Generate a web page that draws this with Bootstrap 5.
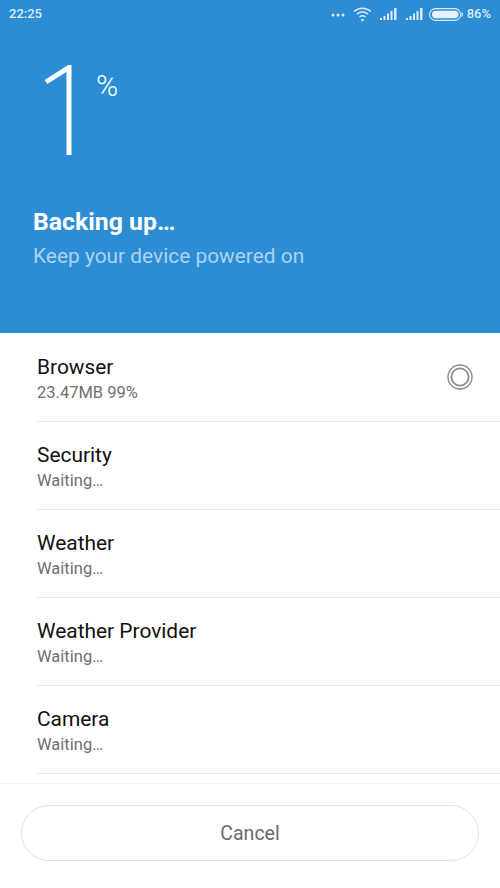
<!DOCTYPE html>
<html lang="en">
  <head>
    <meta charset="UTF-8" />
    <meta name="viewport" content="width=device-width, initial-scale=1.0" />
    <title>Backup</title>
    <link href="https://cdn.jsdelivr.net/npm/bootstrap@5.3.0/dist/css/bootstrap.min.css" rel="stylesheet" />
    <style>
      html, body { height: 888px; overflow: hidden; }
      body { font-family: Roboto, "Liberation Sans", sans-serif; background: #fff; color: #111; }
      .hero { height: 333px; background: #2d8dd4; color: #fff; }
      .status-bar { height: 28px; padding: 0 9px; color: #d9ecfa; font-size: 13px; font-weight: 500; }
      .status-icons svg { display: block; }
      .ic-gap { margin-right: 8px; }
      .ic-gap-last { margin-right: 5px; }
      .pct-row { height: 144px; padding-left: 45px; }
      .one-svg { margin-top: 37px; }
      .pct-sign { font-size: 30px; font-weight: 300; line-height: 1; margin: 43px 0 0 21px; }
      .hero-text { padding: 36px 0 0 33px; }
      .hero-title { font-size: 24.8px; font-weight: 700; line-height: 28px; margin: 0; }
      .hero-sub { font-size: 20.9px; line-height: 28px; margin: 6px 0 0; color: #a9d3f2; }
      .task-list { height: 451px; padding-top: 1px; overflow: hidden; border-bottom: 1px solid #f4f4f4; }
      .task-row { height: 88px; margin-left: 37px; padding-top: 19.5px; border-bottom: 1px solid #e9e9e9; }
      .task-name { font-size: 20.9px; line-height: 26px; }
      .task-state { font-size: 16.5px; line-height: 20px; margin-top: 3.5px; color: #6f6f6f; }
      .task-spin { margin: 10px 27px 0 0; }
      .cancel-wrap { padding: 21px 21px 0; }
      .cancel-btn { height: 56px; padding-top: 8px; border: 1px solid #e2e2e2; border-radius: 28px; background: #fff; color: #6b6b6b; font-size: 19.5px; }
    </style>
  </head>
  <body>
    <div class="hero">
      <div class="status-bar d-flex justify-content-between align-items-center">
        <span>22:25</span>
        <div class="status-icons d-flex align-items-center">
          <svg width="14" height="6" viewBox="0 0 14 6" fill="#d9ecfa" class="ic-gap"><circle cx="2" cy="4" r="1.5"/><circle cx="7" cy="4" r="1.5"/><circle cx="12" cy="4" r="1.5"/></svg>
          <svg width="19" height="16" viewBox="0 0 19 16" fill="none" stroke="#d9ecfa" stroke-width="1.5" class="ic-gap"><path d="M1 5.5C6 1 13 1 18 5.5"/><path d="M3.8 8.2C7 5.4 12 5.4 15.2 8.2"/><path d="M6.5 11C8.2 9.6 10.8 9.6 12.5 11"/><circle cx="9.5" cy="14" r="1.3" fill="#d9ecfa" stroke="none"/></svg>
          <svg width="18" height="14" viewBox="0 0 18 14" fill="#d9ecfa" class="ic-gap"><rect x="0" y="11" width="2" height="2"/><rect x="3.5" y="9" width="2" height="4"/><rect x="7" y="6.5" width="2" height="6.5"/><rect x="10.5" y="4" width="2" height="9"/><rect x="14" y="1" width="2.5" height="12"/></svg>
          <svg width="18" height="14" viewBox="0 0 18 14" fill="#d9ecfa" class="ic-gap-last"><rect x="0" y="11" width="2" height="2"/><rect x="3.5" y="9" width="2" height="4"/><rect x="7" y="6.5" width="2" height="6.5"/><rect x="10.5" y="4" width="2" height="9"/><rect x="14" y="1" width="2.5" height="12"/></svg>
          <svg width="34" height="13" viewBox="0 0 34 13" class="me-1"><rect x="0.6" y="0.6" width="31" height="11.8" rx="5.9" fill="none" stroke="#d9ecfa" stroke-width="1.1"/><rect x="3" y="2.8" width="26.5" height="7.4" rx="3.7" fill="#e6f2fb"/><rect x="32.4" y="4.5" width="1.4" height="4" fill="#d9ecfa"/></svg>
          <span>86%</span>
        </div>
      </div>
      <div class="pct-row d-flex align-items-start">
        <svg class="one-svg" width="30" height="90" viewBox="0 0 30 90" fill="none" stroke="#fff" stroke-width="5"><path d="M1 17L24 2.5V90"/></svg>
        <span class="pct-sign">%</span>
      </div>
      <div class="hero-text">
        <p class="hero-title">Backing up…</p>
        <p class="hero-sub">Keep your device powered on</p>
      </div>
    </div>

    <div class="task-list">
      <div class="task-row d-flex justify-content-between">
        <div>
          <div class="task-name">Browser</div>
          <div class="task-state">23.47MB 99%</div>
        </div>
        <svg class="task-spin" width="26" height="26" viewBox="0 0 26 26" fill="none" stroke="#8c8c8c"><circle cx="13" cy="13" r="12" stroke-width="1.4"/><circle cx="13" cy="13" r="8.6" stroke-width="1.8"/></svg>
      </div>
      <div class="task-row">
        <div class="task-name">Security</div>
        <div class="task-state">Waiting…</div>
      </div>
      <div class="task-row">
        <div class="task-name">Weather</div>
        <div class="task-state">Waiting…</div>
      </div>
      <div class="task-row">
        <div class="task-name">Weather Provider</div>
        <div class="task-state">Waiting…</div>
      </div>
      <div class="task-row">
        <div class="task-name">Camera</div>
        <div class="task-state">Waiting…</div>
      </div>
    </div>

    <div class="cancel-wrap">
      <button type="button" class="btn cancel-btn w-100">Cancel</button>
    </div>

    <script src="https://cdn.jsdelivr.net/npm/bootstrap@5.3.0/dist/js/bootstrap.bundle.min.js"></script>
  </body>
</html>
